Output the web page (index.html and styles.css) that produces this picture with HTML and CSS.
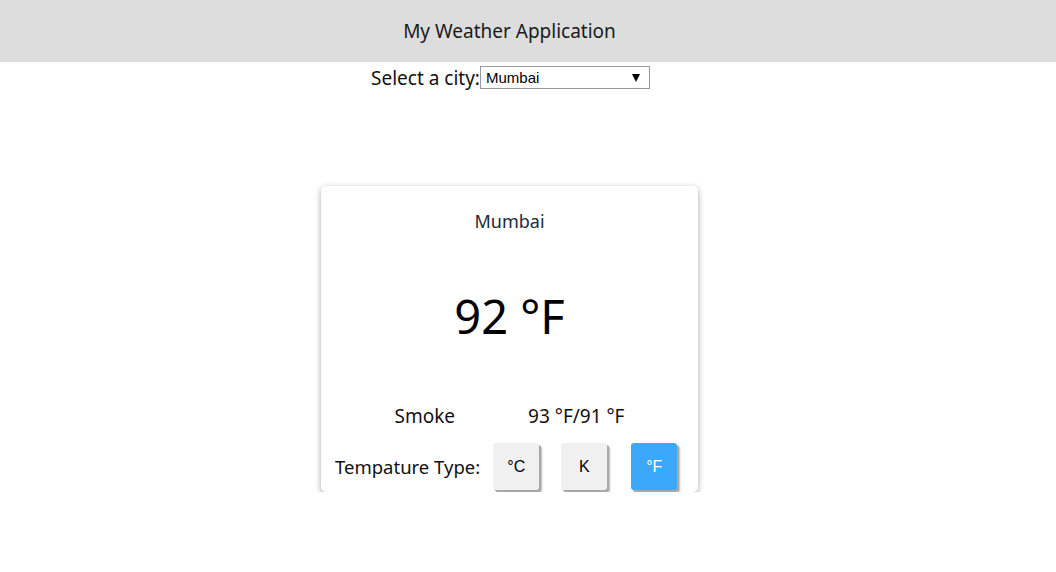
FILE: index.html
```html
<!DOCTYPE html>
<html>
<head>
<meta charset="utf-8">
<link rel="stylesheet" href="styles.css">
</head>
<body>
<div class="page">
<header class="header">My Weather Application</header>
<div class="picker">
  <label class="picker-label">Select a city:</label><span class="select-wrap"><select class="picker-select"><option>Mumbai</option></select></span>
</div>
<main class="stage">
  <div class="card">
    <div class="city">Mumbai</div>
    <div class="temp">92 °F</div>
    <div class="info">
      <span class="cond">Smoke</span>
      <span class="range">93 °F/91 °F</span>
    </div>
    <div class="units">
      <span class="units-label">Tempature Type:</span>
      <button class="unit">°C</button>
      <button class="unit">K</button>
      <button class="unit active">°F</button>
    </div>
  </div>
</main>
</div>
</body>
</html>
```
FILE: styles.css
```css
html, body { margin: 0; padding: 0; background: #fff; }
body { font-family: "Noto Sans", "Open Sans", sans-serif; color: #111; }
.page { width: 1019px; }
.header {
  width: 1056px;
  background: #dddddd;
  height: 62px;
  display: flex;
  align-items: center;
  justify-content: center;
  font-size: 19px;
  color: #1a1a1a;
  padding-right: 37px;
  box-sizing: border-box;
}
.picker {
  display: flex;
  justify-content: center;
  align-items: center;
  height: 31px;
  padding-left: 2px;
}
.picker-label { font-size: 19px; color: #111; }
.select-wrap { position: relative; display: inline-block; }
.select-wrap::after {
  content: "";
  position: absolute;
  right: 10px;
  top: 8px;
  border-left: 4px solid transparent;
  border-right: 4px solid transparent;
  border-top: 8px solid #000;
  pointer-events: none;
}
.picker-select {
  appearance: none;
  -webkit-appearance: none;
  width: 170px;
  height: 23px;
  font-family: "Liberation Sans", Arial, sans-serif;
  font-size: 15px;
  border: 1px solid #999;
  border-radius: 0;
  background: #fff;
  padding: 0 5px;
  color: #000;
  display: block;
}
.stage {
  display: flex;
  justify-content: center;
  padding-top: 93px;
}
.card {
  width: 377px;
  height: 306px;
  box-sizing: border-box;
  border-radius: 5px;
  box-shadow: 0 2px 6px rgba(0,0,0,0.35);
  display: flex;
  flex-direction: column;
  align-items: center;
}
.city {
  margin-top: 23px;
  font-size: 18px;
  color: #222a3a;
}
.temp {
  margin-top: 51px;
  font-size: 47px;
  line-height: 64px;
  color: #000;
}
.info {
  margin-top: 55px;
  display: flex;
  width: 100%;
  justify-content: center;
  gap: 73px;
  font-size: 19px;
  box-sizing: border-box;
}
.units {
  margin-top: 14px;
  display: flex;
  align-items: center;
  width: 100%;
  padding-left: 14px;
  box-sizing: border-box;
}
.units-label { font-size: 18.5px; margin-right: 13px; white-space: nowrap; flex-shrink: 0; }
.unit {
  flex-shrink: 0;
  width: 46px;
  height: 47px;
  border: none;
  border-radius: 3px;
  background: #f0f0f0;
  box-shadow: 2px 2px 0 #a8a8a8, 3px 3px 2px #bbb;
  font-family: "Liberation Sans", Arial, sans-serif;
  font-size: 16px;
  color: #000;
  margin-right: 22px;
  padding: 0;
}
.unit + .unit + .unit { margin-left: 2px; margin-right: 0; }
.unit.active { background: #3ca8fc; color: #fff; }
```
